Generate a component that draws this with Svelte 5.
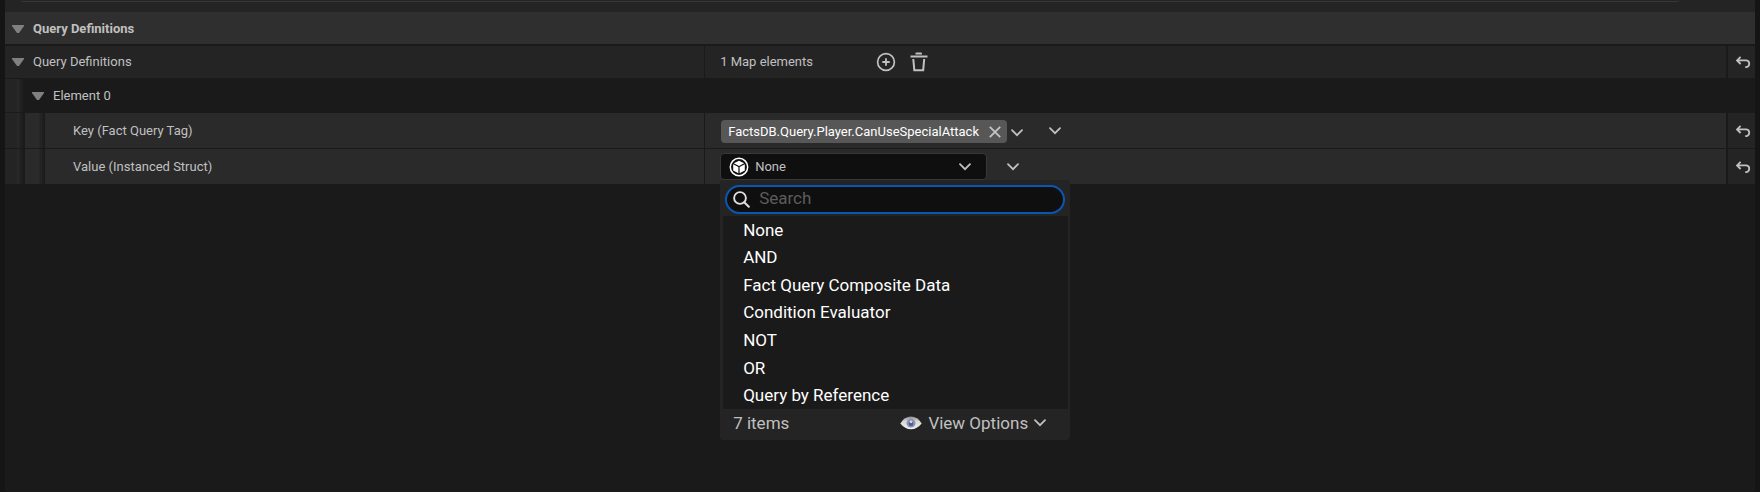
<script>
  let expanded = $state(true);
  let search = $state('');
  const types = [
    'None',
    'AND',
    'Fact Query Composite Data',
    'Condition Evaluator',
    'NOT',
    'OR',
    'Query by Reference'
  ];
  let shown = $derived(types.filter((t) => t.toLowerCase().includes(search.toLowerCase())));
</script>

{#snippet chevron()}
  <svg class="chevron" viewBox="0 0 12 8" width="12" height="8" aria-hidden="true">
    <path d="M1 1.2 6 6.2 11 1.2" fill="none" stroke="currentColor" stroke-width="1.8" stroke-linecap="round" />
  </svg>
{/snippet}

{#snippet arrow()}
  <svg viewBox="0 0 12 8" width="12" height="8" aria-hidden="true">
    <path d="M0 0H12V1L7 8H5L0 1Z" fill="#808080" />
  </svg>
{/snippet}

{#snippet reset()}
  <button class="reset" aria-label="Reset to default">
    <svg viewBox="0 0 15 12" width="15" height="12" aria-hidden="true">
      <path d="M4.6 0.8 1 4.4 4.6 8M1.4 4.4H10.4A3.4 3.4 0 0 1 10.4 11.1H9.2" fill="none" stroke="#c0c0c0" stroke-width="1.8" />
    </svg>
  </button>
{/snippet}

<main class="details">
  <div class="toolbar"><div class="filter-edge"></div></div>

  <h2 class="category">
    <button class="toggle" aria-label="Toggle category">{@render arrow()}</button>
    Query Definitions
  </h2>

  <section class="rows">
    <div class="row map">
      <div class="name">
        <button class="toggle" aria-label="Toggle map" onclick={() => (expanded = !expanded)}>{@render arrow()}</button>
        Query Definitions
      </div>
      <div class="value">
        <span class="count">1 Map elements</span>
        <button class="icon" aria-label="Add element">
          <svg viewBox="0 0 20 20" width="20" height="20" aria-hidden="true">
            <circle cx="10" cy="10" r="8.4" fill="none" stroke="#c0c0c0" stroke-width="1.7" />
            <path d="M10 6.3V13.7M6.3 10H13.7" stroke="#c0c0c0" stroke-width="1.8" />
          </svg>
        </button>
        <button class="icon trash" aria-label="Remove all elements">
          <svg viewBox="0 0 18 20" width="18" height="20" aria-hidden="true">
            <path d="M5.5 2.6V1.6Q5.5 0.6 6.5 0.6H11Q12 0.6 12 1.6V2.6Z" fill="#c0c0c0" />
            <path d="M0.5 4.5H17.5" stroke="#c0c0c0" stroke-width="2" />
            <path d="M3.3 7 4.3 18.2H13.2L14.2 7" fill="none" stroke="#c0c0c0" stroke-width="2" />
          </svg>
        </button>
      </div>
      {@render reset()}
    </div>

    {#if expanded}
      <div class="row element">
        <span class="indent"></span>
        <div class="name">
          <button class="toggle" aria-label="Toggle element">{@render arrow()}</button>
          Element 0
        </div>
      </div>

      <div class="row field">
        <div class="name"><span class="indent"></span><span class="indent"></span><span class="label">Key (Fact Query Tag)</span></div>
        <div class="value">
          <span class="tag">
            FactsDB.Query.Player.CanUseSpecialAttack
            <button class="icon" aria-label="Clear tag">
              <svg viewBox="0 0 12 12" width="12" height="12" aria-hidden="true">
                <path d="M0.8 0.8 11.2 11.2M11.2 0.8 0.8 11.2" stroke="#c4c4c4" stroke-width="1.8" />
              </svg>
            </button>
          </span>
          <button class="icon tag-menu" aria-label="Choose tag">{@render chevron()}</button>
          <button class="icon more" aria-label="Key options">{@render chevron()}</button>
        </div>
        {@render reset()}
      </div>

      <div class="row field">
        <div class="name"><span class="indent"></span><span class="indent"></span><span class="label">Value (Instanced Struct)</span></div>
        <div class="value">
          <div class="picker">
            <button class="combo" aria-haspopup="listbox" aria-expanded="true">
              <svg viewBox="0 0 20 20" width="20" height="20" aria-hidden="true">
                <circle cx="10" cy="10" r="8.7" fill="#0f0f0f" stroke="#fff" stroke-width="1.5" />
                <path d="M10 3.8 15.2 6.2 10 8.9 4.8 6.2Z" fill="#fff" />
                <path d="M4.2 7.3 9.4 10V16.2L4.2 13.4Z" fill="#fff" />
                <path d="M15.8 7.3 10.6 10V16.2L15.8 13.4Z" fill="#fff" />
              </svg>
              <span class="chosen">None</span>
              {@render chevron()}
            </button>

            <div class="popup">
              <label class="search">
                <svg viewBox="0 0 17 17" width="17" height="17" aria-hidden="true">
                  <circle cx="7" cy="7" r="5.9" fill="none" stroke="#e0e0e0" stroke-width="1.9" />
                  <path d="M11.2 11.2 15.8 15.8" stroke="#e0e0e0" stroke-width="2" stroke-linecap="round" />
                </svg>
                <input type="text" placeholder="Search" aria-label="Search" bind:value={search} />
              </label>
              <ul class="options">
                {#each shown as type}
                  <li><button>{type}</button></li>
                {/each}
              </ul>
              <footer>
                <span>{shown.length} items</span>
                <button class="view">
                  <svg viewBox="0 0 22 14" width="22" height="14" aria-hidden="true">
                    <defs>
                      <linearGradient id="lid" x1="0" y1="0" x2="0" y2="1">
                        <stop offset="0" stop-color="#8c8c8c" />
                        <stop offset="0.35" stop-color="#d6d6d6" />
                        <stop offset="1" stop-color="#f0f0f0" />
                      </linearGradient>
                    </defs>
                    <path d="M0.3 7.4Q4.5 0.6 11 0.6T21.7 7.4Q17 13.2 11 13.2T0.3 7.4Z" fill="url(#lid)" />
                    <circle cx="11" cy="7.2" r="4.4" fill="#8592b2" />
                    <circle cx="11" cy="7.8" r="2.2" fill="#4d5d86" />
                    <circle cx="11" cy="5.8" r="1.4" fill="#cfd8ec" />
                  </svg>
                  View Options
                  {@render chevron()}
                </button>
              </footer>
            </div>
          </div>
          <button class="icon more" aria-label="Value options">{@render chevron()}</button>
        </div>
        {@render reset()}
      </div>
    {/if}
  </section>
</main>

<style>
  :global(body) {
    margin: 0;
    background: #151515;
  }
  * {
    box-sizing: border-box;
  }
  button {
    display: flex;
    align-items: center;
    padding: 0;
    border: 0;
    background: none;
    color: inherit;
    font: inherit;
    cursor: pointer;
  }
  svg {
    display: block;
    flex: none;
  }
  .details {
    min-height: 100vh;
    margin: 0 5px;
    background: #1a1a1a;
    color: #c0c0c0;
    font: 13px/16px Roboto, sans-serif;
  }
  .toolbar {
    height: 12px;
    padding: 0 76px 0 16px;
    background: #242424;
  }
  .filter-edge {
    height: 2px;
    border-bottom: 1px solid #383838;
    border-radius: 0 0 8px 8px;
  }
  .category {
    display: flex;
    align-items: center;
    height: 32px;
    margin: 0 0 2px;
    padding: 1px 0 0 7px;
    background: #2f2f2f;
    font-size: 13px;
    font-weight: 700;
  }
  .toggle {
    margin-right: 9px;
  }
  .rows {
    display: grid;
    gap: 1px;
  }
  .row {
    display: grid;
    grid-template-columns: 13fr 19fr 29px;
    --fill: #242424;
  }
  .map {
    height: 32px;
  }
  .element {
    display: flex;
    height: 33px;
  }
  .field {
    height: 35px;
    --fill: #2a2a2a;
  }
  .name,
  .value {
    display: flex;
    align-items: center;
    min-width: 0;
    background: var(--fill);
  }
  .map .name {
    padding-left: 7px;
  }
  .element .name {
    padding-left: 7px;
    background: none;
  }
  .name {
    white-space: nowrap;
  }
  .indent {
    align-self: stretch;
    width: 20px;
    background: linear-gradient(to right, #242424 12px, #2a2a2a 12px, #1c1c1c 18px, #1a1a1a);
  }
  .indent + .indent {
    background: linear-gradient(to right, #2a2a2a 12px, #2c2c2c 12px, #1f1f1f 18px, #1a1a1a);
  }
  .label {
    padding-left: 28px;
  }
  .value {
    padding-left: 15px;
    border-left: 1px solid #1a1a1a;
  }
  .reset {
    justify-content: center;
    margin-left: 2px;
    padding-left: 4px;
    background: #242424;
  }
  .count {
    width: 156px;
  }
  .trash {
    margin-left: 14px;
  }
  .tag {
    display: flex;
    align-items: center;
    gap: 10px;
    height: 23px;
    margin: 2px 0 0 1px;
    padding: 0 6px 0 7px;
    border-radius: 4px;
    background: #575757;
    color: #fff;
  }
  .tag-menu {
    margin: 4px 0 0 4px;
  }
  .more {
    margin-left: 26px;
  }
  .picker {
    position: relative;
  }
  .combo {
    width: 267px;
    height: 27px;
    padding: 0 15px 0 8px;
    border: 1px solid #383838;
    border-radius: 4px;
    background: #0f0f0f;
  }
  .chosen {
    flex: 1;
    padding-left: 6px;
    text-align: left;
  }
  .picker + .more {
    margin-left: 20px;
  }
  .popup {
    position: absolute;
    z-index: 1;
    top: 27px;
    left: 0;
    width: 350px;
    padding: 5px 2px 0 3px;
    border-radius: 3px;
    background: #242424;
    font-size: 17px;
    line-height: 20px;
  }
  .search {
    display: flex;
    align-items: center;
    gap: 9px;
    height: 29px;
    margin: 0 3px 2px 2px;
    padding-left: 6px;
    border: 2px solid #0a57b3;
    border-radius: 15px;
    background: #0f0f0f;
  }
  input {
    flex: 1;
    min-width: 0;
    padding: 0 0 3px;
    border: 0;
    outline: 0;
    background: none;
    color: #fff;
    font: inherit;
  }
  input::placeholder {
    color: #5c5c5c;
  }
  .options {
    display: grid;
    grid-auto-rows: 1fr;
    height: 193px;
    margin: 0;
    padding: 0;
    background: #1a1a1a;
    color: #fff;
    list-style: none;
  }
  .options button {
    width: 100%;
    height: 100%;
    padding-left: 20px;
  }
  footer {
    display: flex;
    align-items: center;
    justify-content: space-between;
    height: 31px;
    padding: 0 22px 3px 10px;
  }
  .view {
    gap: 6px;
  }
</style>
